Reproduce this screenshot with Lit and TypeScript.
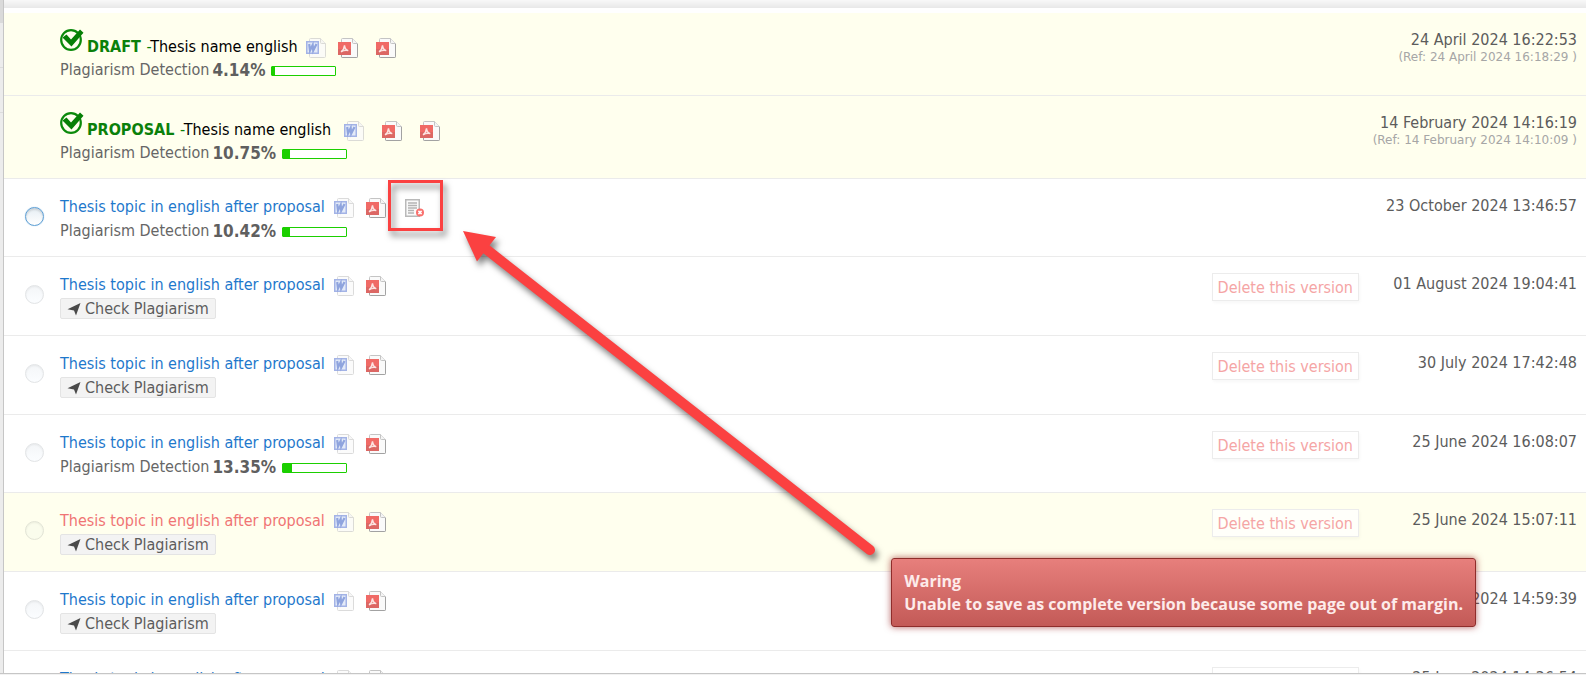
import { LitElement, html, css, nothing, svg } from "lit";
import { customElement, property } from "lit/decorators.js";
import { classMap } from "lit/directives/class-map.js";

type Doc = "word" | "pdf" | "report";

interface Version {
  stage?: string;
  title: string;
  docs: Doc[];
  detection?: number;
  date: string;
  ref?: string;
  active?: boolean;
  marked?: boolean;
  removable?: boolean;
}

const TOPIC = "Thesis topic in english after proposal";

const VERSIONS: Version[] = [
  { stage: "DRAFT", title: "Thesis name english", docs: ["word", "pdf", "pdf"], detection: 4.14, date: "24 April 2024 16:22:53", ref: "24 April 2024 16:18:29" },
  { stage: "PROPOSAL", title: "Thesis name english", docs: ["word", "pdf", "pdf"], detection: 10.75, date: "14 February 2024 14:16:19", ref: "14 February 2024 14:10:09" },
  { title: TOPIC, docs: ["word", "pdf", "report"], detection: 10.42, date: "23 October 2024 13:46:57", active: true },
  { title: TOPIC, docs: ["word", "pdf"], date: "01 August 2024 19:04:41", removable: true },
  { title: TOPIC, docs: ["word", "pdf"], date: "30 July 2024 17:42:48", removable: true },
  { title: TOPIC, docs: ["word", "pdf"], detection: 13.35, date: "25 June 2024 16:08:07", removable: true },
  { title: TOPIC, docs: ["word", "pdf"], date: "25 June 2024 15:07:11", marked: true, removable: true },
  { title: TOPIC, docs: ["word", "pdf"], date: "25 June 2024 14:59:39", removable: true },
  { title: TOPIC, docs: ["word", "pdf"], date: "25 June 2024 14:36:54", removable: true },
];

const sheet = (stroke: string) => svg`
  <path d="M3.5 1.5q0-1 1-1h10l5 5v13q0 1-1 1h-14q-1 0-1-1z" fill="#fafafa" stroke=${stroke}/>
  <path d="M14.5.5v4q0 1 1 1h4" fill="#f4f4f4" stroke=${stroke}/>`;

const ICONS = {
  word: html`<svg width="20" height="20" viewBox="0 0 20 20" fill="none" aria-hidden="true">
    <g opacity=".75">${sheet("#cfcfcf")}</g>
    <rect x=".75" y="3.75" width="11.5" height="11.5" fill="#e3eaf8" stroke="#a3b3e6" stroke-width="1.5"/>
    <path d="M3.200 6l.8 6.500 2.700-5.500.5 5.500 3.300-6.500" stroke="#8fa4de" stroke-width="2.200"/>
  </svg>`,
  pdf: html`<svg width="20" height="20" viewBox="0 0 20 20" fill="none" aria-hidden="true">
    ${sheet("#c4c4c4")}
    <path d="M3.500 17v1.500q0 1 1 1h14q1 0 1-1V6" stroke="#a2a2a2"/>
    <path d="M0 4h13v13H0z" fill="#f06a66"/>
    <path d="M0 11h13v6H0z" fill="#dc6764"/>
    <path d="M3 13.800c2-1.300 3.300-4 3.500-6.500.3 2.700 1.600 4.700 3.800 5.300-2.400-.5-5-.1-7.300 1.200z" fill="#eb9490" stroke="#fde4e2" stroke-width="1.400"/>
  </svg>`,
  report: html`<svg width="20" height="20" viewBox="0 0 20 20" fill="none" aria-hidden="true">
    <rect x=".75" y="1.750" width="13.500" height="16.500" fill="#fafafa" stroke="#b9b9b9" stroke-width="1.500"/>
    <path d="M3 5h9M3 7.500h9M3 10h9M3 12.500h6M3 15h6" stroke="#b4b4b4" stroke-width="1.300"/>
    <circle cx="15" cy="14.500" r="4" fill="#f9706d"/>
    <path d="M13.400 12.900l3.200 3.200M16.600 12.900l-3.200 3.200" stroke="#fff" stroke-width="1.500"/>
  </svg>`,
};

const LABELS = { word: "Word file", pdf: "PDF file", report: "Margin report" };

@customElement("version-row")
export class VersionRow extends LitElement {
  @property({ attribute: false }) version!: Version;

  static styles = css`
    :host { display: block; }
    .row {
      display: grid;
      grid-template-columns: 56px 1fr auto 218px;
      align-items: start;
      box-sizing: border-box;
      min-height: 78px;
      padding-right: 9px;
      border-bottom: 1px solid #ebebeb;
      background: #fff;
    }
    .row.stage { min-height: 83px; }
    .row.checkable { min-height: 79px; }
    .row.tinted { background: #ffffee; }
    .pick {
      appearance: none;
      width: 19px;
      height: 19px;
      margin: 28px 0 0 21px;
      border: 1px solid #e2e4e6;
      border-radius: 50%;
      background: linear-gradient(#f4f6f8, #fbfdff);
      box-shadow: inset 0 1px 2px rgba(0, 0, 0, 0.06);
    }
    .tinted .pick { background: #fafcec; border-color: #e2e4d6; }
    .pick.active {
      border-color: #5f9fd4;
      background: linear-gradient(#e6eef4, #fff);
      box-shadow: 0 0 1px #7fb6e0, inset 0 2px 2px rgba(0, 0, 0, 0.12);
    }
    .body { padding-top: 17px; }
    .stage .body { padding-top: 14px; }
    .line { display: flex; align-items: center; height: 22px; white-space: nowrap; }
    .stage .title { height: 30px; align-items: flex-end; }
    .link { color: #1e78cc; text-decoration: none; }
    .marked .link { color: #f07474; }
    .seal { width: 24px; height: 24px; margin: 0 3px 5px 0; }
    .name { color: #000; }
    .name b, .name i { color: #0a800a; font-style: normal; }
    .name b { margin-right: 1px; }
    .docs { display: flex; gap: 12px; margin-left: 9px; padding-top: 2px; }
    .stage .docs { gap: 18px; margin-left: 13px; padding: 0; }
    .stage .docs.tight { gap: 12px; margin-left: 8px; }
    .tight .doc:last-child { margin-left: 6px; }
    .doc { display: block; height: 20px; }
    .stage .doc { height: 19px; }
    .doc.report { margin-left: 7px; }
    .detection { height: 26px; color: #666; }
    .percent { margin-left: 3px; font-size: 17px; font-weight: bold; color: #5f5f5f; }
    .meter {
      box-sizing: border-box;
      width: 65px;
      height: 10px;
      margin: 2px 0 0 6px;
      border: 1px solid #1bcf00;
      border-radius: 1px;
      background: #fff;
    }
    .fill { display: block; height: 100%; background: #1bcf00; }
    .check {
      display: flex;
      align-items: center;
      gap: 4px;
      height: 21px;
      margin-top: 2px;
      padding: 0 6px;
      border: 1px solid #e4e4e4;
      border-radius: 2px;
      background: #f3f3f3;
      font: inherit;
      color: #5c5c5c;
    }
    .delete {
      height: 28px;
      margin-top: 16px;
      padding: 2px 5px 0;
      border: 1px solid #ececec;
      background: rgba(255, 255, 255, 0.7);
      box-shadow: 1px 2px 3px rgba(0, 0, 0, 0.03);
      font: inherit;
      color: #f5a5a5;
    }
    .when { grid-column: 4; padding-top: 17px; text-align: right; line-height: 20px; color: #5c5c5c; white-space: nowrap; }
    .ref { display: block; font: 12px/14px "DejaVu Sans", sans-serif; color: #a6a6a6; }
  `;

  render() {
    const v = this.version;
    const classes = {
      row: true,
      stage: !!v.stage,
      checkable: v.detection === undefined,
      tinted: !!v.stage || !!v.marked,
      marked: !!v.marked,
    };
    return html`
      <div class=${classMap(classes)}>
        ${v.stage
          ? html`<span></span>`
          : html`<input class=${classMap({ pick: true, active: !!v.active })} type="radio" name="version"
              aria-label=${`Version of ${v.date}`} ?disabled=${!v.active} />`}
        <div class="body">
          <div class="line title">
            ${v.stage ? this.stageName(v) : html`<a class="link" href="#">${v.title}</a>`}
            <span class=${classMap({ docs: true, tight: v.stage === "DRAFT" })}>
              ${v.docs.map((d) => html`<a class="doc ${d}" href="#" aria-label=${LABELS[d]}>${ICONS[d]}</a>`)}
            </span>
          </div>
          ${v.detection === undefined ? this.checkButton() : this.detection(v.detection)}
        </div>
        ${v.removable ? html`<button class="delete" type="button">Delete this version</button>` : nothing}
        <div class="when">
          ${v.date}${v.ref ? html`<span class="ref">(Ref: ${v.ref} )</span>` : nothing}
        </div>
      </div>`;
  }

  private stageName(v: Version) {
    return html`
      <svg class="seal" viewBox="0 0 24 24" fill="none" aria-hidden="true">
        <circle cx="11" cy="12" r="9.800" stroke="#0b8a0b" stroke-width="2.200"/>
        <path d="M2.500 9.500l4-3 4.500 5L20 1.500l3.500 3.200L11.500 18.500z" fill="#067f06"/>
      </svg>
      <span class="name"><b>${v.stage}</b> <i>-</i>${v.title}</span>`;
  }

  private checkButton() {
    return html`<button class="check" type="button">
      <svg width="14" height="14" viewBox="0 0 14 14" aria-hidden="true">
        <path d="M13.500 1L9 13.500 7 8.500 .500 7.300z" fill="#4a4a4a"/>
      </svg>Check Plagiarism</button>`;
  }

  private detection(value: number) {
    return html`<div class="line detection">
      Plagiarism Detection
      <span class="percent">${value.toFixed(2)}%</span>
      <span class="meter"><span class="fill" style="width:${value}%"></span></span>
    </div>`;
  }
}

@customElement("app-root")
export class AppRoot extends LitElement {
  static styles = css`
    :host {
      display: flex;
      flex-direction: column;
      position: relative;
      height: 100vh;
      overflow: hidden;
      background: #fff;
      font: 16px/20px "DejaVu Sans Condensed", "DejaVu Sans", sans-serif;
    }
    .frame { display: flex; flex: 1; min-height: 0; }
    .rail { flex: none; width: 3px; border-right: 1px solid #c6c6c6; background: #ececec; }
    .rail-tab { height: 44px; border-bottom: 1px solid #dcdcdc; }
    .rail-tab.current { height: 23px; border: 0; background: #dadada; }
    .content { flex: 1; min-width: 0; overflow: hidden; }
    .top { height: 8px; margin-bottom: 5px; background: linear-gradient(#f8f8f8, #e8e8e8); }
    .bottom { flex: none; height: 1px; border-top: 1px solid #c6c6c6; background: #f2f2f2; }
    .overlay { position: absolute; left: 0; top: 0; overflow: visible; pointer-events: none; }
    .marks { filter: drop-shadow(3px 5px 3px rgba(0, 0, 0, 0.5)); }
    .toast {
      position: absolute;
      right: 110px;
      bottom: 48px;
      padding: 11px 12px 10px;
      border: 1px solid #8f2d2b;
      border-radius: 3px;
      background: linear-gradient(#e77f7c, #c35a57);
      box-shadow: 0 0 7px rgba(150, 30, 30, 0.7);
      font: bold 16px/23px "Open Sans", sans-serif;
      color: #fdebea;
    }
    .toast p { margin: 0; }
  `;

  render() {
    return html`
      <div class="frame">
        <div class="rail">
          <div class="rail-tab current"></div>
          <div class="rail-tab"></div>
          <div class="rail-tab"></div>
        </div>
        <main class="content">
          <div class="top"></div>
          ${VERSIONS.map((v) => html`<version-row .version=${v}></version-row>`)}
        </main>
      </div>
      <div class="bottom"></div>
      <svg class="overlay" width="900" height="600" aria-hidden="true">
        <g class="marks">
          <rect x="389.500" y="181.500" width="52" height="48" fill="none" stroke="#fb4141" stroke-width="3"/>
          <path d="M486 249L870 550" stroke="#fb4141" stroke-width="10" stroke-linecap="round"/>
          <path d="M463 231L496 237 477 261.500z" fill="#fb4141"/>
        </g>
      </svg>
      <div class="toast" role="alert">
        <p>Waring</p>
        <p>Unable to save as complete version because some page out of margin.</p>
      </div>`;
  }
}
